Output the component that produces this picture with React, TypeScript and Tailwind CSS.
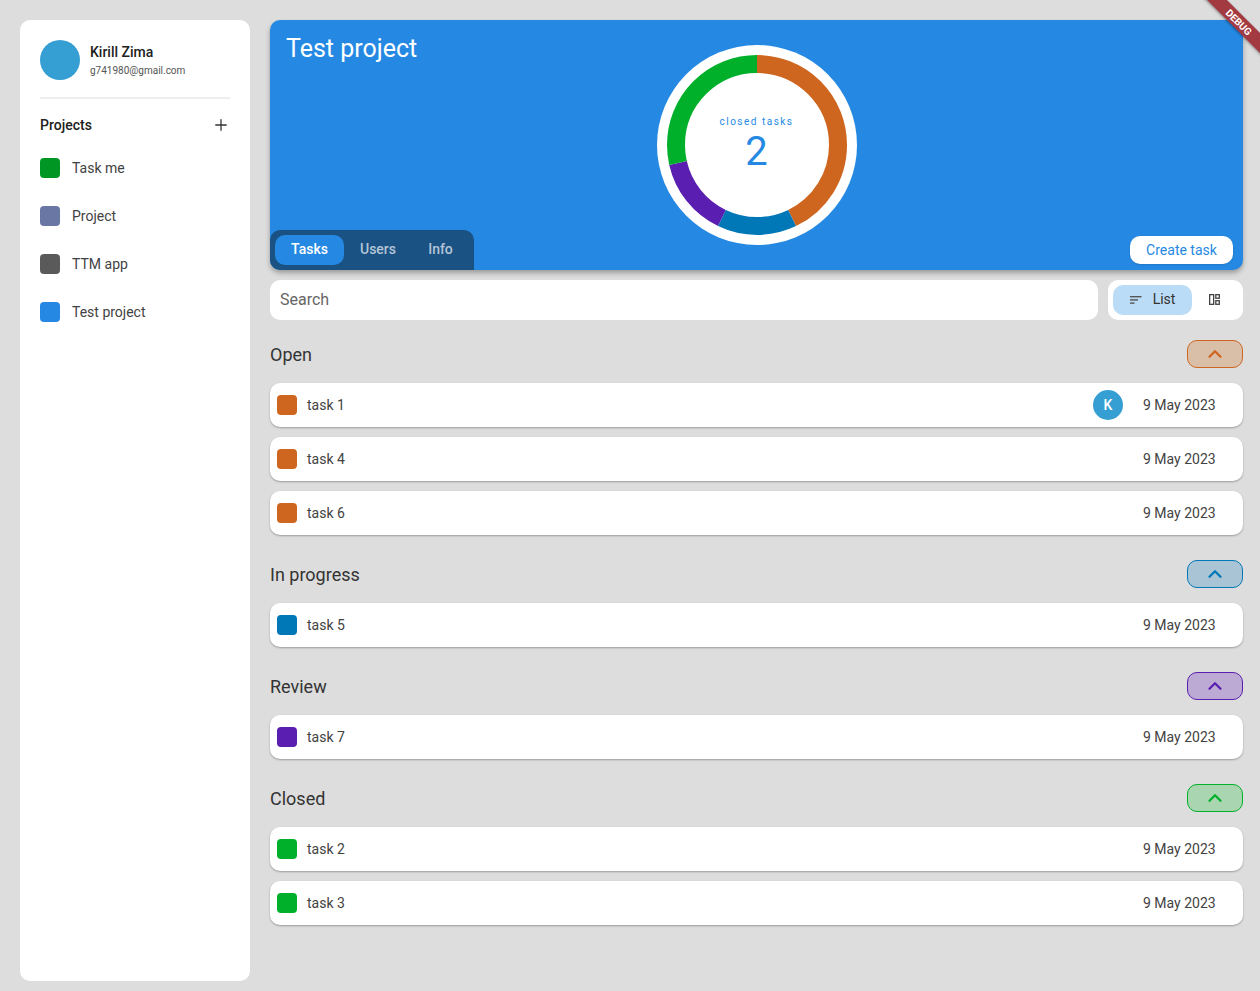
import React from 'react';
import { ChevronUp, Plus } from 'lucide-react';

const projects = [
  { name: 'Task me', color: 'bg-[#009624]' },
  { name: 'Project', color: 'bg-[#6a76a4]' },
  { name: 'TTM app', color: 'bg-[#5a5a5a]' },
  { name: 'Test project', color: 'bg-[#2589e3]' },
];

const sections = [
  {
    title: 'Open',
    button: 'border-[#cf661f] bg-[#d9bfa8] text-[#cf661f]',
    dot: 'bg-[#cf661f]',
    tasks: ['task 1', 'task 4', 'task 6'],
  },
  {
    title: 'In progress',
    button: 'border-[#0077b6] bg-[#a9c5d5] text-[#0077b6]',
    dot: 'bg-[#0077b6]',
    tasks: ['task 5'],
  },
  {
    title: 'Review',
    button: 'border-[#5a1fb0] bg-[#bdaad4] text-[#5a1fb0]',
    dot: 'bg-[#5a1fb0]',
    tasks: ['task 7'],
  },
  {
    title: 'Closed',
    button: 'border-[#00b02a] bg-[#a9d5b0] text-[#00b02a]',
    dot: 'bg-[#00b02a]',
    tasks: ['task 2', 'task 3'],
  },
];

const rows = [
  { color: '#cf661f', length: 3, offset: 0 },
  { color: '#0077b6', length: 1, offset: 3 },
  { color: '#5a1fb0', length: 1, offset: 4 },
  { color: '#00b02a', length: 2, offset: 5 },
];

function Donut() {
  return (
    <div className="absolute left-1/2 top-[25px] flex h-[200px] w-[200px] -translate-x-1/2 items-center justify-center rounded-full bg-white">
      <svg width="200" height="200" viewBox="0 0 200 200" className="absolute inset-0 -rotate-90">
        {rows.map((s) => (
          <circle
            key={s.color}
            cx="100"
            cy="100"
            r="81"
            fill="none"
            stroke={s.color}
            strokeWidth="18"
            pathLength={7}
            strokeDasharray={`${s.length} ${7 - s.length}`}
            strokeDashoffset={-s.offset}
          />
        ))}
      </svg>
      <div className="relative flex flex-col items-center pt-[2px] text-[#2589e3]">
        <span className="text-[10px] leading-3 tracking-[1.5px]">closed tasks</span>
        <span className="text-[40px] leading-[48px] font-normal">2</span>
      </div>
    </div>
  );
}

function Sidebar() {
  return (
    <aside className="flex w-[230px] shrink-0 flex-col rounded-[10px] bg-white px-5 pt-5">
      <div className="flex items-center gap-[10px] border-b-2 border-[#eeeeee] pb-[17px]">
        <div className="h-10 w-10 rounded-full bg-[#359fd3]" />
        <div className="flex flex-col gap-[3px]">
          <span className="text-[14px] leading-[18px] font-medium text-[#212121]">Kirill Zima</span>
          <span className="text-[10px] leading-[14px] text-[#555555]">g741980@gmail.com</span>
        </div>
      </div>
      <div className="mt-4 flex h-5 items-center justify-between">
        <span className="text-[14px] font-medium text-[#212121]">Projects</span>
        <Plus size={18} strokeWidth={1.7} className="text-[#333333]" />
      </div>
      <div className="mt-[23px] flex flex-col gap-7">
        {projects.map((p) => (
          <div key={p.name} className="flex h-5 items-center gap-3">
            <div className={`h-5 w-5 rounded ${p.color}`} />
            <span className="text-[14px] text-[#424242]">{p.name}</span>
          </div>
        ))}
      </div>
    </aside>
  );
}

function Header() {
  return (
    <header className="relative flex h-[250px] flex-col justify-between rounded-[10px] bg-[#2589e3] shadow-[0_3px_5px_rgba(0,0,0,0.3)]">
      <h1 className="px-4 pt-[12px] text-[25px] leading-[34px] text-white">Test project</h1>
      <Donut />
      <div className="flex items-end justify-between">
        <div className="flex h-10 items-center rounded-tr-[10px] rounded-bl-[10px] rounded-tl-[10px] bg-[#1b5284] px-[5px]">
          <div className="flex h-[30px] w-[69px] items-center justify-center rounded-[10px] bg-[#2589e3] pb-[2px] text-[14px] font-medium text-white">
            Tasks
          </div>
          <div className="flex h-[30px] w-[68px] items-center justify-center pb-[2px] text-[14px] font-medium text-[#b3c5d6]">Users</div>
          <div className="flex h-[30px] w-[57px] items-center justify-center pb-[2px] text-[14px] font-medium text-[#b3c5d6]">Info</div>
        </div>
        <button className="mr-[10px] mb-[6px] flex h-7 w-[103px] items-center justify-center rounded-[10px] bg-white text-[14px] text-[#2589e3] shadow-sm">
          Create task
        </button>
      </div>
    </header>
  );
}

function Toolbar() {
  return (
    <div className="mt-[10px] flex gap-[10px]">
      <div className="flex h-10 flex-1 items-center rounded-[10px] bg-white px-[10px] text-[16px] text-[#666666]">
        Search
      </div>
      <div className="flex h-10 w-[135px] items-center rounded-[10px] bg-white p-[5px]">
        <div className="flex h-[30px] w-[79px] items-center justify-center gap-[11px] rounded-[10px] bg-[#bbdcf6] text-[14px] text-[#333333]">
          <svg width="12" height="8" viewBox="0 0 12 8" fill="#555555" className="mb-[1px]">
            <rect x="0" y="0" width="11.5" height="1.4" />
            <rect x="0" y="3.2" width="8" height="1.4" />
            <rect x="0" y="6.4" width="4.5" height="1.4" />
          </svg>
          <span className="pb-[1px]">List</span>
        </div>
        <div className="flex flex-1 justify-center pr-[2px] pb-[2px]">
          <svg width="11" height="11" viewBox="0 0 11 11" fill="none" stroke="#444444" strokeWidth="1.3">
            <rect x="0.65" y="0.65" width="4" height="9.7" />
            <rect x="6.8" y="0.65" width="3.5" height="3.6" />
            <rect x="6.8" y="6.7" width="3.5" height="3.6" />
          </svg>
        </div>
      </div>
    </div>
  );
}

function TaskRow({ name, dot, assigned }: { name: string; dot: string; assigned: boolean }) {
  return (
    <div className="flex h-11 items-center rounded-[10px] bg-white pl-[7px] shadow-[0_1px_2px_rgba(0,0,0,0.3)]">
      <div className={`h-5 w-5 rounded ${dot}`} />
      <span className="ml-[10px] flex-1 text-[14px] text-[#424242]">{name}</span>
      {assigned && (
        <div className="mr-5 flex h-[30px] w-[30px] items-center justify-center rounded-full bg-[#359fd3] text-[14px] font-medium text-white">
          K
        </div>
      )}
      <span className="w-[100px] text-[14px] text-[#424242]">9 May 2023</span>
    </div>
  );
}

export default function App() {
  return (
    <div className="relative flex h-[991px] gap-5 overflow-hidden bg-[#dddddd] pt-5 pr-[17px] pb-[10px] pl-5 font-['Roboto',sans-serif]">
      <Sidebar />
      <main className="flex min-w-0 flex-1 flex-col">
        <Header />
        <Toolbar />
        <div className="mt-5 flex flex-col gap-[25px]">
          {sections.map((section) => (
            <section key={section.title}>
              <div className="flex h-7 items-center justify-between">
                <h2 className="text-[18px] text-[#333333]">{section.title}</h2>
                <div className={`flex h-7 w-14 items-center justify-center rounded-[10px] border ${section.button}`}>
                  <ChevronUp size={22} strokeWidth={2.5} />
                </div>
              </div>
              <div className="mt-[15px] flex flex-col gap-[10px]">
                {section.tasks.map((task) => (
                  <TaskRow key={task} name={task} dot={section.dot} assigned={task === 'task 1'} />
                ))}
              </div>
            </section>
          ))}
        </div>
      </main>
      {/* debug ribbon in the corner */}
      <div className="absolute top-[15px] right-[-29px] flex h-[14px] w-[100px] rotate-45 items-center justify-center bg-[#a33a42] text-[10px] font-bold text-white shadow-[0_1px_3px_rgba(0,0,0,0.4)]">
        DEBUG
      </div>
    </div>
  );
}
